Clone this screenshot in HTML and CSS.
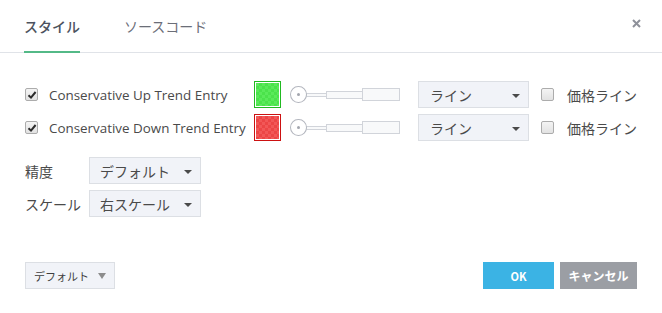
FILE: index.html
```html
<!DOCTYPE html>
<html lang="ja">
<head>
  <meta charset="UTF-8" />
  <title>スタイル</title>
  <link rel="stylesheet" href="styles.css">
</head>
<body>
  <div class="dialog">
    <div class="header">
      <div class="tab active">スタイル</div>
      <div class="tab">ソースコード</div>
      <div class="close">
        <svg width="9" height="9" viewBox="0 0 9 9"><path d="M1 1L8 8M8 1L1 8" stroke="#8e919a" stroke-width="2"/></svg>
      </div>
    </div>

    <div class="content">
      <div class="plots">
        <span class="checkbox checked"><svg width="10" height="10" viewBox="0 0 10 10"><path d="M1.5 5.2L4 7.6L8.6 2" fill="none" stroke="#2b2b2b" stroke-width="2"/></svg></span>
        <span class="plot-label">Conservative Up Trend Entry</span>
        <span class="swatch"><span class="swatch-fill green"></span></span>
        <div class="slider">
          <span class="knob"></span><span class="seg thin"></span><span class="seg mid"></span><span class="seg wide"></span>
        </div>
        <div class="select wide-select"><span>ライン</span><span class="caret"></span></div>
        <span class="checkbox"></span>
        <span class="cjk-label">価格ライン</span>

        <span class="checkbox checked"><svg width="10" height="10" viewBox="0 0 10 10"><path d="M1.5 5.2L4 7.6L8.6 2" fill="none" stroke="#2b2b2b" stroke-width="2"/></svg></span>
        <span class="plot-label">Conservative Down Trend Entry</span>
        <span class="swatch red-border"><span class="swatch-fill red"></span></span>
        <div class="slider">
          <span class="knob"></span><span class="seg thin"></span><span class="seg mid"></span><span class="seg wide"></span>
        </div>
        <div class="select wide-select"><span>ライン</span><span class="caret"></span></div>
        <span class="checkbox"></span>
        <span class="cjk-label">価格ライン</span>
      </div>

      <div class="options">
        <span class="cjk-label">精度</span>
        <div class="select"><span>デフォルト</span><span class="caret"></span></div>
        <span class="cjk-label">スケール</span>
        <div class="select"><span>右スケール</span><span class="caret"></span></div>
      </div>
    </div>

    <div class="footer">
      <div class="defaults"><span>デフォルト</span><span class="caret grey"></span></div>
      <div class="buttons">
        <button class="btn ok">OK</button>
        <button class="btn cancel">キャンセル</button>
      </div>
    </div>
  </div>
</body>
</html>
```

FILE: styles.css
```css
body {
  margin: 0;
  background-color: #fff;
  font-family: "Open Sans", "Noto Sans CJK JP", sans-serif;
  color: #4a4a4a;
}
.dialog {
  width: 662px;
  height: 313px;
  display: flex;
  flex-direction: column;
}
.header {
  height: 52px;
  border-bottom: 1px solid #e0e3e8;
  display: flex;
  align-items: stretch;
  padding-left: 24px;
  font-family: "Noto Sans CJK JP", sans-serif;
}
.tab {
  font-size: 14px;
  color: #6b6e78;
  display: flex;
  align-items: center;
  margin-right: 44px;
  border-bottom: 2px solid transparent;
  margin-bottom: -1px;
  padding-top: 1px;
}
.tab.active {
  color: #4c525e;
  font-weight: 500;
  border-bottom-color: #53b987;
}
.close {
  align-self: flex-start;
  margin-left: auto;
  margin-right: 21px;
  padding-top: 19px;
}
.close svg {
  display: block;
}
.content {
  padding: 28px 0 0 25px;
}
.plots {
  display: grid;
  grid-template-columns: 24px 205px 36px 128px 123px 26px auto;
  grid-auto-rows: 27px;
  row-gap: 6px;
  align-items: center;
}
.checkbox {
  width: 11px;
  height: 11px;
  border: 1px solid #acacac;
  border-radius: 2px;
  background: linear-gradient(#f4f4f4, #e2e2e2);
  display: flex;
  align-items: center;
  justify-content: center;
}
.plot-label {
  font-size: 13.4px;
  color: #4a4a4a;
}
.cjk-label {
  font-family: "Noto Sans CJK JP", sans-serif;
  font-size: 14px;
  color: #4a4a4a;
}
.swatch {
  width: 23px;
  height: 23px;
  border: 1px solid #21b921;
  padding: 1px;
  display: flex;
}
.swatch.red-border {
  border-color: #cc1111;
}
.swatch-fill {
  flex: 1;
}
.swatch-fill.green {
  background: repeating-conic-gradient(#4be24b 0 25%, #5aea5a 0 50%) 0 0 / 6px 6px;
}
.swatch-fill.red {
  background: repeating-conic-gradient(#ec4545 0 25%, #f25757 0 50%) 0 0 / 6px 6px;
}
.slider {
  display: flex;
  align-items: center;
  width: 110px;
}
.knob {
  width: 15px;
  height: 15px;
  border: 1px solid #b4b7bf;
  border-radius: 50%;
  background: #fff;
  position: relative;
  z-index: 1;
}
.knob::after {
  content: "";
  position: absolute;
  left: 6px;
  top: 6px;
  width: 3px;
  height: 3px;
  border-radius: 50%;
  background: #a3a6ae;
}
.seg {
  border: 1px solid #d1d4da;
  background: #f8f9fa;
  margin-left: -1px;
}
.seg.thin {
  width: 20px;
  height: 2px;
}
.seg.mid {
  width: 36px;
  height: 6px;
}
.seg.wide {
  width: 37px;
  height: 11px;
}
.select {
  width: 109px;
  height: 25px;
  border: 1px solid #dcdfe4;
  background: #f1f3f8;
  display: flex;
  align-items: center;
  justify-content: space-between;
  padding: 0 8px 0 11px;
  box-sizing: border-box;
  font-family: "Noto Sans CJK JP", sans-serif;
  font-size: 14px;
  color: #4a4a4a;
}
.wide-select {
  width: 111px;
  height: 27px;
}
.caret {
  width: 0;
  height: 0;
  border-left: 4px solid transparent;
  border-right: 4px solid transparent;
  border-top: 4px solid #4a4a4a;
  margin-top: 2px;
}
.caret.grey {
  border-left-width: 4px;
  border-right-width: 4px;
  border-top: 6px solid #8c8c8c;
  margin-top: 0;
}
.options {
  display: grid;
  grid-template-columns: 64px 112px;
  grid-auto-rows: 27px;
  row-gap: 6px;
  align-items: center;
  margin-top: 16px;
}
.options .select {
  width: 112px;
  height: 27px;
  padding-left: 10px;
}
.footer {
  display: flex;
  justify-content: space-between;
  align-items: center;
  padding: 0 25px;
  margin-top: 45px;
}
.defaults {
  width: 90px;
  height: 27px;
  border: 1px solid #dcdfe4;
  background: #f1f3f8;
  box-sizing: border-box;
  display: flex;
  align-items: center;
  justify-content: space-between;
  padding: 0 8px 0 8px;
  font-family: "Noto Sans CJK JP", sans-serif;
  font-size: 11px;
  color: #3e3e3e;
}
.buttons {
  display: flex;
  gap: 6px;
}
.btn {
  height: 27px;
  border: none;
  color: #fff;
  font-family: "Noto Sans CJK JP", sans-serif;
  font-weight: bold;
  font-size: 12px;
  padding: 0;
}
.btn.ok {
  width: 71px;
  background: #3bb3e4;
  font-size: 11px;
}
.btn.cancel {
  width: 77px;
  background: #9b9ea4;
}
```
